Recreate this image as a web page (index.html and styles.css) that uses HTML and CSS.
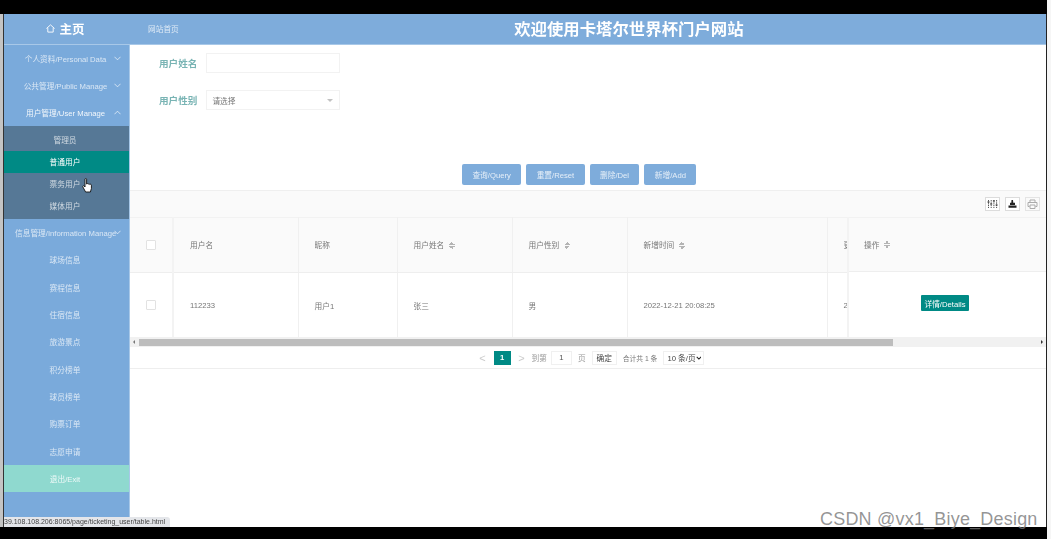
FILE: index.html
```html
<!DOCTYPE html>
<html lang="zh-CN">
<head>
    <meta charset="UTF-8">
    <title>用户管理</title>
    <link rel="stylesheet" href="styles.css">
</head>
<body>
    <div class="screen">
        <header class="topbar">
            <div class="brand">
                <svg class="home-icon" viewBox="0 0 10 10"><path d="M0.5 5 L5 1 L9.5 5 M2 4.2 V9 H8 V4.2" fill="none" stroke="#fff" stroke-width="1"/></svg>
                <span>主页</span>
            </div>
            <div class="crumb">网站首页</div>
            <div class="site-title">欢迎使用卡塔尔世界杯门户网站</div>
        </header>

        <div class="body-row">
            <nav class="sidebar">
                <div class="menu-row top"><span>个人资料/Personal Data</span><svg class="chev" viewBox="0 0 8 5"><path d="M0.5 0.5 L4 4 L7.5 0.5" /></svg></div>
                <div class="menu-row top"><span>公共管理/Public Manage</span><svg class="chev" viewBox="0 0 8 5"><path d="M0.5 0.5 L4 4 L7.5 0.5" /></svg></div>
                <div class="menu-row top open"><span>用户管理/User Manage</span><svg class="chev" viewBox="0 0 8 5"><path d="M0.5 4.5 L4 1 L7.5 4.5" /></svg></div>
                <div class="submenu">
                    <div class="sub-row">管理员</div>
                    <div class="sub-row active">普通用户</div>
                    <div class="sub-row">票务用户</div>
                    <div class="sub-row">媒体用户</div>
                </div>
                <div class="menu-row top tight"><span>信息管理/Information Manage</span><svg class="chev" viewBox="0 0 8 5"><path d="M0.5 0.5 L4 4 L7.5 0.5" /></svg></div>
                <div class="menu-row">球场信息</div>
                <div class="menu-row">赛程信息</div>
                <div class="menu-row">住宿信息</div>
                <div class="menu-row">旅游景点</div>
                <div class="menu-row">积分榜单</div>
                <div class="menu-row">球员榜单</div>
                <div class="menu-row">购票订单</div>
                <div class="menu-row">志愿申请</div>
                <div class="menu-row exit">退出/Exit</div>
            </nav>

            <main class="content">
                <form class="search-form">
                    <div class="field">
                        <label>用户姓名</label>
                        <div class="input"></div>
                    </div>
                    <div class="field">
                        <label>用户性别</label>
                        <div class="input select">请选择<i class="caret"></i></div>
                    </div>
                </form>

                <div class="actions">
                    <button type="button" class="btn">查询/Query</button>
                    <button type="button" class="btn">重置/Reset</button>
                    <button type="button" class="btn">删除/Del</button>
                    <button type="button" class="btn">新增/Add</button>
                </div>

                <div class="toolbar">
                    <span class="tool">
                        <svg viewBox="0 0 11 10"><path d="M1.5 1 V9 M4.2 1 V9 M6.9 1 V9 M9.6 1 V9" stroke="#555" stroke-width="1" stroke-dasharray="1.5 0.8" fill="none"/><path d="M0.5 3 H2.5 M3.2 5 H5.2 M5.9 2 H7.9 M8.6 6 H10.6" stroke="#222" fill="none"/></svg>
                    </span>
                    <span class="tool">
                        <svg viewBox="0 0 11 10"><path d="M4.5 1 H6 L6.3 3.8 H8 V6 H3 V3.8 H4.3 Z M1.5 6.5 H9.5 V8.8 H1.5 Z" fill="#222"/></svg>
                    </span>
                    <span class="tool faded">
                        <svg viewBox="0 0 11 10"><path d="M3 3.5 V1 H8 V3.5 M2.5 7.5 H1 V3.5 H10 V7.5 H8.5 M3 6 H8 V9.5 H3 Z" fill="none" stroke="#aaa"/></svg>
                    </span>
                </div>

                <div class="table-wrap">
                    <div class="table-clip">
                        <table class="grid">
                            <colgroup>
                                <col class="c-check"><col class="c-user"><col class="c-nick"><col class="c-name"><col class="c-sex"><col class="c-time"><col class="c-more">
                            </colgroup>
                            <thead>
                                <tr>
                                    <th class="cell-check"><span class="checkbox"></span></th>
                                    <th>用户名</th>
                                    <th>昵称</th>
                                    <th>用户姓名<i class="sort"></i></th>
                                    <th>用户性别<i class="sort"></i></th>
                                    <th>新增时间<i class="sort"></i></th>
                                    <th>更新时间</th>
                                </tr>
                            </thead>
                            <tbody>
                                <tr>
                                    <td class="cell-check"><span class="checkbox"></span></td>
                                    <td>112233</td>
                                    <td>用户1</td>
                                    <td>张三</td>
                                    <td>男</td>
                                    <td>2022-12-21 20:08:25</td>
                                    <td>2022-12-21</td>
                                </tr>
                            </tbody>
                        </table>
                    </div>
                    <div class="fixed-right">
                        <div class="fixed-head">操作<i class="sort"></i></div>
                        <div class="fixed-cell"><button type="button" class="detail-btn">详情/Details</button></div>
                    </div>
                </div>

                <div class="hscroll">
                    <span class="arrow left"></span>
                    <span class="thumb"></span>
                    <span class="arrow right"></span>
                </div>

                <div class="pager">
                    <span class="pg-nav">&lt;</span>
                    <span class="pg-cur">1</span>
                    <span class="pg-nav">&gt;</span>
                    <span>到第</span>
                    <span class="pg-input">1</span>
                    <span>页</span>
                    <span class="pg-ok">确定</span>
                    <span class="pg-total">合计共 1 条</span>
                    <span class="pg-size">10 条/页<svg viewBox="0 0 8 5"><path d="M1 1 L4 4 L7 1" fill="none" stroke="#222" stroke-width="1.4"/></svg></span>
                </div>
            </main>
        </div>

        <svg class="hand" viewBox="0 0 11 15"><path d="M3 1.2 C3 0.4 4.6 0.4 4.6 1.2 V6 C5 5.4 6 5.4 6.2 6.2 C6.6 5.6 7.6 5.7 7.8 6.5 C8.2 6 9.4 6.2 9.4 7.2 V10.5 L8.4 14 H3.6 L0.8 8.8 C0.5 7.8 1.6 7.4 2.2 8 L3 9 Z" fill="#fff" stroke="#111" stroke-width="0.9"/></svg>
        <div class="status-tip">39.108.108.206:8065/page/ticketing_user/table.html</div>
    </div>
    <div class="watermark">CSDN @vx1_Biye_Design</div>
</body>
</html>
```

FILE: styles.css
```css
* {
    box-sizing: border-box;
}
html, body {
    margin: 0;
    height: 100%;
    overflow: hidden;
    background: #000;
}
body {
    font-family: "Liberation Sans", "Noto Sans CJK SC", sans-serif;
    font-size: 7.7px;
    color: #777;
    position: relative;
    padding: 14px 0 12px;
    border-right: 4px solid #f6f6f6;
}
.screen {
    position: relative;
    height: 513px;
    display: flex;
    flex-direction: column;
    background: #fff;
    border-left: 4px solid #c4c4c4;
    filter: blur(0.45px);
}
.screen::before {
    content: "";
    width: 1px;
    background: #333;
    position: absolute;
    left: -1px;
    top: 0;
    bottom: 0;
    z-index: 3;
}
.screen::after {
    content: "";
    width: 1px;
    background: #222;
    position: absolute;
    right: 0;
    top: 0;
    bottom: 0;
}

/* top bar */
.topbar {
    height: 31px;
    padding-bottom: 2px;
    display: flex;
    align-items: center;
    background: #7eacdb;
    border-bottom: 1px solid #a8c8e8;
    color: #fff;
}
.brand {
    width: 126px;
    padding-right: 3px;
    display: flex;
    align-items: center;
    justify-content: center;
    gap: 4px;
    font-size: 12.5px;
    font-weight: bold;
}
.home-icon {
    width: 9px;
    height: 9px;
}
.crumb {
    margin-left: 18px;
    color: rgba(255, 255, 255, 0.75);
}
.site-title {
    flex: 1;
    padding-left: 32px;
    text-align: center;
    font-size: 16.4px;
    font-weight: bold;
}

/* sidebar */
.body-row {
    flex: 1;
    display: flex;
    min-height: 0;
}
.sidebar {
    width: 126px;
    flex-shrink: 0;
    background: #7aaadb;
    border-right: 1px solid #a8c8e8;
    color: rgba(255, 255, 255, 0.72);
}
.menu-row {
    height: 27.3px;
    display: flex;
    align-items: center;
    justify-content: center;
    padding-right: 3px;
}
.menu-row.top {
    height: 27px;
    display: grid;
    grid-template-columns: 11px 101px 13px;
    padding: 0 0 1px;
    white-space: nowrap;
}
.menu-row.top span {
    grid-column: 2;
    text-align: center;
}
.menu-row.tight {
    height: 27.3px;
    padding-bottom: 0;
}
.menu-row.open {
    color: rgba(255, 255, 255, 0.9);
}
.menu-row.exit {
    background: #8fd9cf;
    color: rgba(255, 255, 255, 0.85);
}
.chev {
    grid-column: 3;
    justify-self: end;
    margin-right: 8px;
    margin-left: -8px;
    width: 7px;
    height: 5px;
}
.chev path {
    fill: none;
    stroke: rgba(255, 255, 255, 0.75);
}
.submenu {
    height: 93px;
    padding-top: 3px;
    background: #567896;
}
.sub-row {
    height: 22px;
    display: flex;
    align-items: center;
    justify-content: center;
    padding: 0 3px 1px 0;
    color: rgba(255, 255, 255, 0.7);
}
.sub-row.active {
    background: #008a85;
    color: #fff;
}

/* main column */
.content {
    flex: 1;
    min-width: 0;
    overflow: hidden;
    background: #fff;
}
.search-form {
    height: 119px;
    padding: 8px 0 0 29px;
}
.field {
    height: 20px;
    display: flex;
    align-items: center;
    gap: 9px;
    margin-bottom: 17px;
}
.field label {
    padding-bottom: 1px;
    font-size: 9.6px;
    font-weight: bold;
    color: #79b4b4;
}
.input {
    width: 134px;
    height: 20px;
    border: 1px solid #f2f2f2;
    background: #fff;
}
.select {
    display: flex;
    align-items: center;
    justify-content: space-between;
    padding: 0 6px 0 5px;
    color: #777;
}
.caret {
    width: 0;
    height: 0;
    border-left: 3px solid transparent;
    border-right: 3px solid transparent;
    border-top: 3px solid #c2c2c2;
}
.actions {
    display: flex;
    gap: 5px;
    padding-left: 332px;
    height: 26px;
}
.btn {
    height: 21px;
    padding: 0 10.4px;
    border: none;
    border-radius: 2px;
    background: #7eacdb;
    color: rgba(255, 255, 255, 0.8);
    font: inherit;
}
.toolbar {
    height: 27px;
    display: flex;
    align-items: center;
    justify-content: flex-end;
    gap: 5px;
    padding-right: 7px;
    background: #fafafa;
    border-top: 1px solid #efefef;
}
.tool {
    width: 15px;
    height: 14px;
    display: flex;
    align-items: center;
    justify-content: center;
    border: 1px solid #dcdcdc;
    background: #fff;
}
.tool.faded {
    border-color: #e4e4e4;
    background: #fafafa;
}
.tool svg {
    width: 11px;
    height: 10px;
}

/* table */
.table-wrap {
    display: flex;
    height: 120px;
}
.table-clip {
    flex: 1;
    min-width: 0;
    overflow: hidden;
}
.grid {
    width: 800px;
    table-layout: fixed;
    border-collapse: collapse;
}
.c-check { width: 43px; }
.c-user { width: 125px; }
.c-nick { width: 99px; }
.c-name { width: 115px; }
.c-sex { width: 115px; }
.c-time { width: 200px; }
.c-more { width: 103px; }
.grid th, .grid td {
    padding: 0 0 0 16px;
    text-align: left;
    font-weight: normal;
    white-space: nowrap;
    overflow: hidden;
    border-right: 1px solid #f0f0f0;
    color: #777;
}
.grid th {
    height: 55px;
    padding-bottom: 1px;
    background: #fafafa;
    border-top: 1px solid #f2f2f2;
    border-bottom: 1px solid #eee;
}
.grid td {
    height: 65px;
}
.grid .cell-check {
    padding: 0 0 0 16px;
    border-right: 2px solid #f3f3f3;
}
.checkbox {
    display: block;
    width: 10px;
    height: 10px;
    border: 1px solid #e2e2e2;
    border-radius: 1px;
    background: #fff;
}
.sort {
    display: inline-block;
    vertical-align: middle;
    width: 6px;
    height: 7px;
    margin-left: 5px;
    background:
        linear-gradient(to top left, #b4b4b4 50%, transparent 50%) 0 0 / 3px 3px no-repeat,
        linear-gradient(to top right, #b4b4b4 50%, transparent 50%) 3px 0 / 3px 3px no-repeat,
        linear-gradient(to bottom left, #b4b4b4 50%, transparent 50%) 0 4px / 3px 3px no-repeat,
        linear-gradient(to bottom right, #b4b4b4 50%, transparent 50%) 3px 4px / 3px 3px no-repeat;
}
.fixed-right {
    width: 200px;
    flex-shrink: 0;
    border-left: 2px solid #f3f3f3;
    background: #fff;
}
.fixed-head {
    height: 55px;
    padding: 0 0 1px 15px;
    display: flex;
    align-items: center;
    background: #fafafa;
    border-top: 1px solid #f2f2f2;
    border-bottom: 1px solid #eee;
}
.fixed-cell {
    padding: 23px 0 0 72px;
}
.detail-btn {
    display: block;
    width: 48px;
    height: 16px;
    padding: 0;
    border: none;
    border-radius: 1px;
    background: #008a85;
    color: #fff;
    font: inherit;
}
.hscroll {
    height: 10px;
    display: flex;
    align-items: center;
    background: #f1f1f1;
}
.arrow {
    width: 9px;
    flex-shrink: 0;
}
.arrow.left::before {
    content: "";
    display: block;
    margin-left: 3px;
    width: 0;
    border: 2px solid transparent;
    border-right-color: #777;
    border-left: 0;
}
.arrow.right {
    margin-left: auto;
    width: 6px;
}
.arrow.right::before {
    content: "";
    display: block;
    width: 0;
    border: 2px solid transparent;
    border-left-color: #333;
    border-right: 0;
}
.thumb {
    width: 754px;
    height: 7px;
    background: #bdbdbd;
}
.pager {
    height: 22px;
    display: flex;
    align-items: center;
    justify-content: center;
    gap: 6px;
    padding-left: 6px;
    border-bottom: 1px solid #eee;
    color: #999;
}
.pg-nav {
    width: 8px;
    color: #ccc;
    text-align: center;
    font-size: 11px;
}
.pg-cur {
    width: 17px;
    height: 14px;
    display: flex;
    align-items: center;
    justify-content: center;
    margin: 0 1px;
    background: #008a85;
    color: #fff;
    font-weight: bold;
}
.pg-input {
    width: 21px;
    height: 14px;
    margin-left: -2px;
    display: flex;
    align-items: center;
    justify-content: center;
    border: 1px solid #f0f0f0;
    color: #555;
}
.pg-ok {
    width: 25px;
    height: 14px;
    display: flex;
    align-items: center;
    justify-content: center;
    border: 1px solid #f0f0f0;
    color: #444;
}
.pg-total {
    color: #777;
    font-size: 6.8px;
}
.pg-size {
    width: 41px;
    height: 14px;
    display: flex;
    align-items: center;
    justify-content: space-between;
    padding: 0 2px 0 3px;
    border: 1px solid #f0f0f0;
    color: #444;
    white-space: nowrap;
}
.pg-size svg {
    width: 6px;
    height: 4px;
}

/* things lying over the page */
.hand {
    position: absolute;
    left: 78px;
    top: 164px;
    width: 11px;
    height: 15px;
}
.status-tip {
    position: absolute;
    left: 0;
    bottom: 0;
    width: 166px;
    height: 10px;
    background: #e4e6ea;
    border-radius: 0 3px 0 0;
    color: #444;
    font-size: 7px;
    line-height: 10px;
    white-space: nowrap;
    overflow: hidden;
}
.watermark {
    position: absolute;
    left: 820px;
    top: 509px;
    font-size: 18px;
    letter-spacing: 0.2px;
    color: rgba(120, 120, 120, 0.78);
    white-space: nowrap;
}
```
